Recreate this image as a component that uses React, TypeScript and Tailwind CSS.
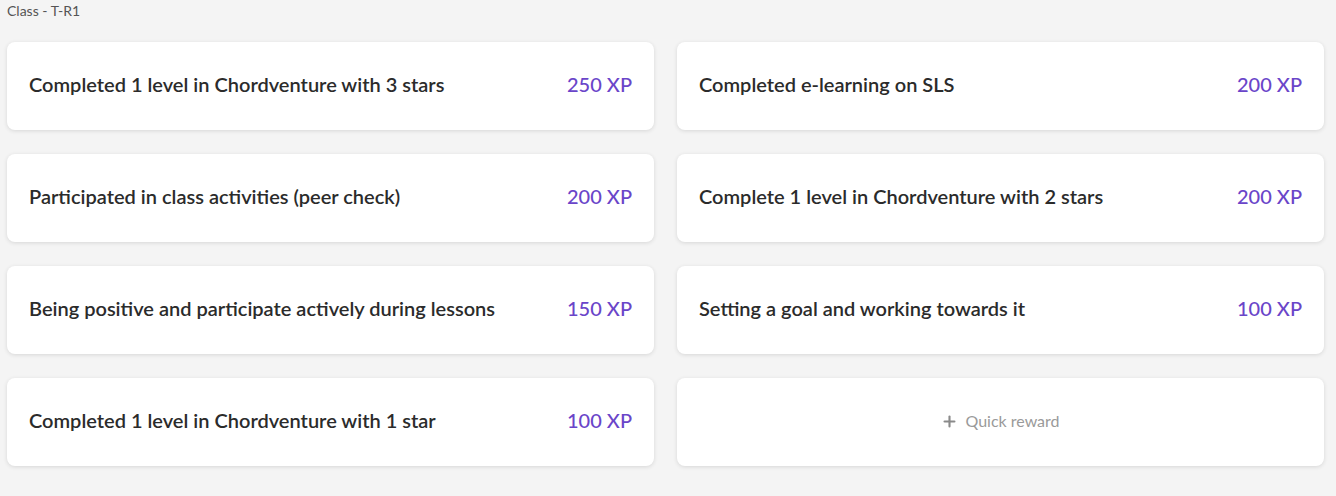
import { Plus } from "lucide-react";

interface Reward {
  label: string;
  xp: number;
}

const rewards: Reward[] = [
  { label: "Completed 1 level in Chordventure with 3 stars", xp: 250 },
  { label: "Completed e-learning on SLS", xp: 200 },
  { label: "Participated in class activities (peer check)", xp: 200 },
  { label: "Complete 1 level in Chordventure with 2 stars", xp: 200 },
  { label: "Being positive and participate actively during lessons", xp: 150 },
  { label: "Setting a goal and working towards it", xp: 100 },
  { label: "Completed 1 level in Chordventure with 1 star", xp: 100 },
];

function RewardCard({ label, xp }: Reward) {
  return (
    <div className="flex h-[88px] items-center justify-between rounded-lg bg-white px-[22px] pb-[4px] shadow-[0_1px_4px_rgba(0,0,0,0.12)]">
      <span className="text-[20px] font-semibold text-[#2b2b2b]">{label}</span>
      <span className="text-[20px] font-medium text-[#6a45c9]">{xp} XP</span>
    </div>
  );
}

export default function App() {
  return (
    <div
      className="min-h-[496px] bg-[#f4f4f4] pl-[7px] pr-[12px] pt-[2px]"
      style={{ fontFamily: "Lato, 'Open Sans', sans-serif" }}
    >
      <div className="text-[14px] leading-[18px] text-[#555]">Class - T-R1</div>

      {/* Reward grid */}
      <div className="mt-[22px] grid grid-cols-2 gap-x-[23px] gap-y-[24px]">
        {rewards.map((r) => (
          <RewardCard key={r.label} {...r} />
        ))}

        <button className="flex h-[88px] items-center justify-center gap-[7px] rounded-lg bg-white pb-[2px] shadow-[0_1px_4px_rgba(0,0,0,0.12)]">
          <Plus size={17} strokeWidth={3} className="text-[#8a8a8a]" />
          <span className="text-[16px] text-[#9a9a9a]">Quick reward</span>
        </button>
      </div>
    </div>
  );
}
